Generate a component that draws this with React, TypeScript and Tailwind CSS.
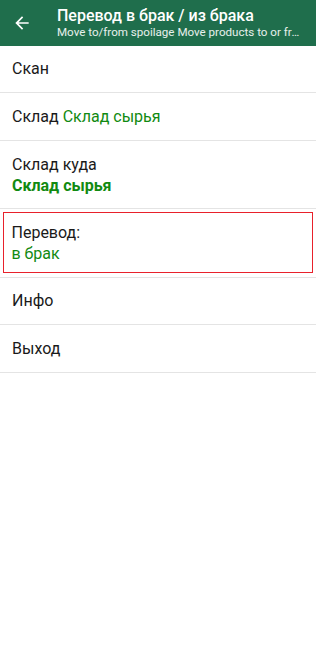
import React from "react";

const green = "text-[#118a11]";

export default function App() {
  return (
    <div className="w-[316px] h-[665px] bg-white" style={{ fontFamily: "Roboto, 'Noto Sans', sans-serif" }}>
      <div className="h-[46px] bg-[#1f6e4c] flex items-center">
        <div className="w-[57px] flex justify-center pr-[14px] shrink-0">
          <svg width="20" height="20" viewBox="0 0 24 24" fill="#ffffff">
            <path d="M20 11H7.83l5.59-5.59L12 4l-8 8 8 8 1.41-1.41L7.83 13H20v-2z" />
          </svg>
        </div>
        <div className="flex flex-col min-w-0 pr-[12px]">
          <div className="text-white text-[16px] leading-[19px] font-medium truncate">Перевод в брак / из брака</div>
          <div className="text-white/90 text-[11.6px] leading-[15px] truncate">Move to/from spoilage Move products to or from spoilage</div>
        </div>
      </div>
      <div className="h-[47px] flex items-center px-[12px] border-b border-[#e4e4e4] text-[16px] text-[#1a1a1a]">Скан</div>
      <div className="h-[48px] flex items-center px-[12px] border-b border-[#e4e4e4] text-[16px] text-[#1a1a1a]">
        Склад&nbsp;<span className={green}>Склад сырья</span>
      </div>
      <div className="h-[68px] flex flex-col justify-center px-[12px] border-b border-[#e4e4e4] text-[16px] leading-[21px] text-[#1a1a1a]">
        <div>Склад куда</div>
        <div className={`${green} font-bold`}>Склад сырья</div>
      </div>
      <div className="h-[69px] border-b border-[#e4e4e4] pt-[3px] px-[3px]">
        <div className="h-[61px] border-[1.5px] border-[#e8212b] flex flex-col justify-center px-[7.5px] text-[16px] leading-[21px] text-[#1a1a1a]">
          <div>Перевод:</div>
          <div className={green}>в брак</div>
        </div>
      </div>
      <div className="h-[47px] flex items-center px-[12px] border-b border-[#e4e4e4] text-[16px] text-[#1a1a1a]">Инфо</div>
      <div className="h-[48px] flex items-center px-[12px] border-b border-[#e4e4e4] text-[16px] text-[#1a1a1a]">Выход</div>
    </div>
  );
}
